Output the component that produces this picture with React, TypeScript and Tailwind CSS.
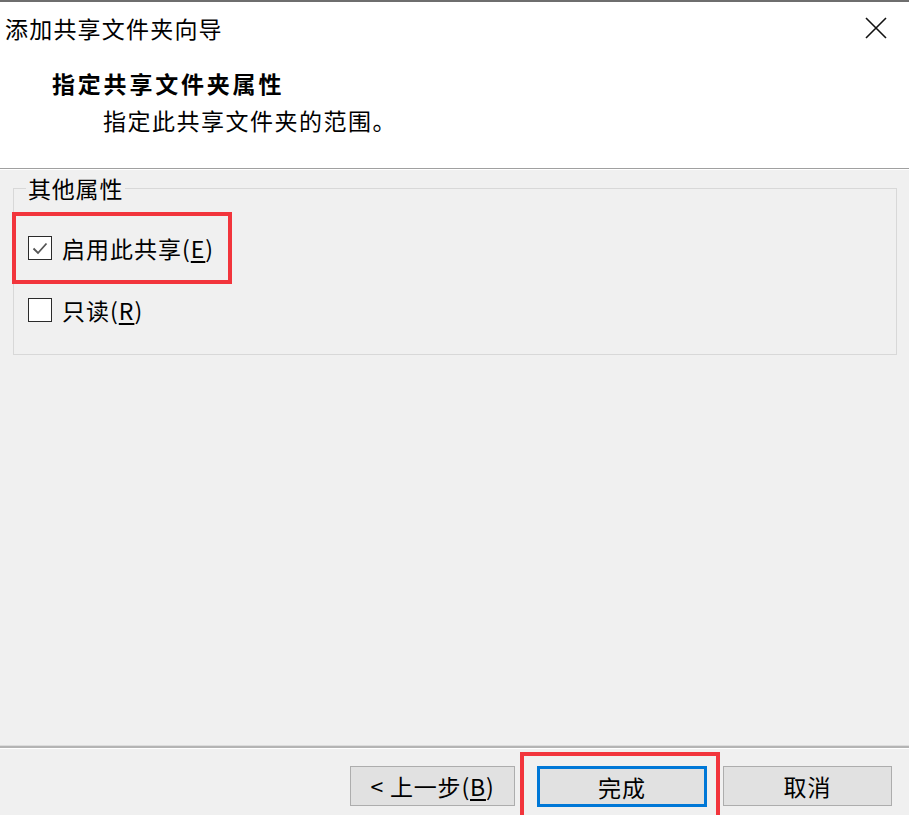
import React from "react";

const font = { fontFamily: '"Noto Sans CJK SC", "Noto Sans", sans-serif' };

function Checkbox({ checked }: { checked?: boolean }) {
  return (
    <span className="w-[24px] h-[24px] border-[1.5px] border-[#2b2b2b] bg-white flex items-center justify-center shrink-0">
      {checked && (
        <svg width="18" height="18" viewBox="0 0 18 18">
          <path d="M2.5 9.5 L7 14 L15.5 4.5" fill="none" stroke="#555" strokeWidth="1.8" />
        </svg>
      )}
    </span>
  );
}

function Key({ k }: { k: string }) {
  return (
    <>
      (<span className="underline underline-offset-[3px]">{k}</span>)
    </>
  );
}

export default function App() {
  return (
    <div
      className="w-[909px] h-[815px] overflow-hidden flex flex-col bg-[#f0f0f0] text-black"
      style={font}
    >
      {/* header */}
      <div className="h-[169px] shrink-0 bg-white border-t-2 border-[#6e6e6e] border-b border-b-[#a0a0a0] flex flex-col">
        <div className="flex items-center justify-between pt-[14px] pl-[5px] pr-[21px]">
          <span className="text-[23px] leading-[24px] tracking-[1.2px]">添加共享文件夹向导</span>
          <svg width="24" height="24" viewBox="0 0 24 24">
            <path d="M2 2 L22 22 M22 2 L2 22" stroke="#111" strokeWidth="1.6" />
          </svg>
        </div>
        <div className="mt-[31px] pl-[52px] text-[23px] leading-[24px] font-bold tracking-[2.8px]">
          指定共享文件夹属性
        </div>
        <div className="mt-[13px] pl-[103px] text-[23px] leading-[24px] tracking-[1.5px]">
          指定此共享文件夹的范围。
        </div>
      </div>
      <div className="h-px bg-white shrink-0" />

      {/* body */}
      <div className="flex-1 px-[13px] pr-[12px]">
        <fieldset className="mt-[6px] border border-[#d8d8d8] h-[179px] min-w-0 p-0">
          <legend className="ml-[12px] px-[2px] text-[23px] leading-[24px] tracking-[0.8px]">其他属性</legend>
          <div className="ml-[-2px] mt-[12px] w-[220px] h-[72px] border-4 border-[#f2353c] flex items-center pl-[12px] gap-[10px]">
            <Checkbox checked />
            <span className="text-[23px] leading-[24px] tracking-[1px]">
              启用此共享<Key k="E" />
            </span>
          </div>
          <div className="mt-[14px] flex items-center pl-[14px] gap-[10px]">
            <Checkbox />
            <span className="text-[23px] leading-[24px] tracking-[1px]">
              只读<Key k="R" />
            </span>
          </div>
        </fieldset>
      </div>

      {/* footer */}
      <div className="h-[3px] shrink-0 bg-[#b4b4b4] border-t border-[#dcdcdc]" />
      <div className="h-px bg-white shrink-0" />
      <div className="h-[66px] shrink-0 flex justify-end items-start pr-[17px]">
        <button className="mt-[17px] w-[165px] h-[40px] bg-[#e1e1e1] border border-[#adadad] text-[23px] leading-[24px] tracking-[0.8px] flex items-center justify-center">
          &lt;&nbsp;上一步<Key k="B" />
        </button>
        <div className="ml-[5px] mt-[3px] w-[200px] h-[70px] border-4 border-[#f2353c] pl-[13px] pt-[10px]">
          <button className="w-[170px] h-[41px] bg-[#e1e1e1] border-[3px] border-[#0078d7] text-[23px] leading-[24px] tracking-[1px] flex items-center justify-center">
            完成
          </button>
        </div>
        <button className="ml-[3px] mt-[17px] w-[169px] h-[40px] bg-[#e1e1e1] border border-[#adadad] text-[23px] leading-[24px] tracking-[1px] flex items-center justify-center">
          取消
        </button>
      </div>
    </div>
  );
}
